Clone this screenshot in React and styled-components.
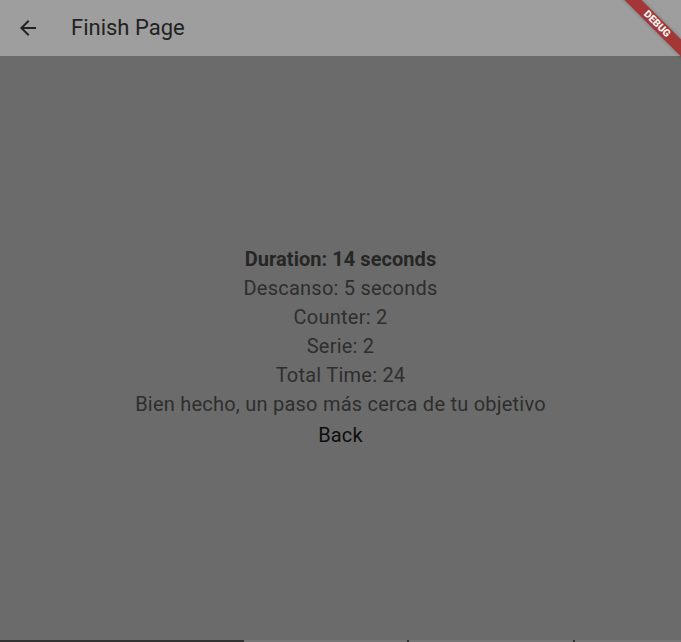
import React from 'react';
import styled, { createGlobalStyle } from 'styled-components';

const Global = createGlobalStyle`
	html, body {
		margin: 0;
		padding: 0;
		background: #6b6b6b;
		font-family: Roboto, "Liberation Sans", sans-serif;
	}
`;

const Page = styled.div`
	position: relative;
	height: 100vh;
	display: flex;
	flex-direction: column;
	overflow: hidden;
	background: #6b6b6b;
`;

const AppBar = styled.header`
	height: 56px;
	flex: none;
	display: flex;
	align-items: center;
	background: #9e9e9e;
	padding-left: 16px;
	h1 {
		margin: 0 0 1px 31px;
		font-size: 22px;
		font-weight: 400;
		color: #222;
	}
`;

const BackIcon = styled.svg`
	width: 24px;
	height: 24px;
	fill: #222;
`;

const Body = styled.main`
	flex: 1;
	display: flex;
	flex-direction: column;
	align-items: center;
	justify-content: center;
	padding-bottom: 2px;
`;

const Line = styled.p`
	margin: 0;
	font-size: 20px;
	line-height: 29px;
	letter-spacing: ${(p) => (p.bold ? '0.05px' : '0.23px')};
	color: ${(p) => (p.bold ? '#262626' : '#2e2e2e')};
	font-weight: ${(p) => (p.bold ? 700 : 400)};
`;

const BackButton = styled.button`
	margin-top: 2px;
	border: none;
	background: none;
	padding: 0 8px;
	font-family: inherit;
	font-size: 20px;
	line-height: 29px;
	letter-spacing: 0.2px;
	color: #0e0e0e;
	cursor: pointer;
`;

const Strip = styled.div`
	height: 2px;
	flex: none;
	display: flex;
	background: #767676;
`;

const StripPart = styled.div`
	height: 100%;
	width: ${(p) => p.w}px;
	background: ${(p) => p.color || 'transparent'};
	flex: none;
`;

const BannerClip = styled.div`
	position: absolute;
	top: 0;
	right: 0;
	width: 80px;
	height: 80px;
	overflow: hidden;
	pointer-events: none;
`;

const Ribbon = styled.div`
	position: absolute;
	left: 6px;
	top: 18px;
	width: 100px;
	height: 12px;
	background: #a33636;
	box-shadow: 0 0 4px rgba(0, 0, 0, 0.25);
	transform: rotate(45deg);
	display: flex;
	align-items: center;
	justify-content: center;
	color: #f4f4f4;
	font-size: 10.2px;
	line-height: 1;
	font-weight: 900;
	font-family: Roboto, "Liberation Sans", sans-serif;
`;

const App = () => {
	return (
		<Page>
			<Global />
			<AppBar>
				<BackIcon viewBox="0 0 24 24">
					<path d="M20 11H7.83l5.59-5.59L12 4l-8 8 8 8 1.41-1.41L7.83 13H20v-2z" />
				</BackIcon>
				<h1>Finish Page</h1>
			</AppBar>
			<Body>
				<Line bold>Duration: 14 seconds</Line>
				<Line>Descanso: 5 seconds</Line>
				<Line>Counter: 2</Line>
				<Line>Serie: 2</Line>
				<Line>Total Time: 24</Line>
				<Line>Bien hecho, un paso más cerca de tu objetivo</Line>
				<BackButton>Back</BackButton>
			</Body>
			<Strip>
				<StripPart w={244} color="#333" />
				<StripPart w={163} />
				<StripPart w={2} color="#333" />
				<StripPart w={164} />
				<StripPart w={2} color="#333" />
			</Strip>
			<BannerClip>
				<Ribbon>DEBUG</Ribbon>
			</BannerClip>
		</Page>
	);
};

export default App;
